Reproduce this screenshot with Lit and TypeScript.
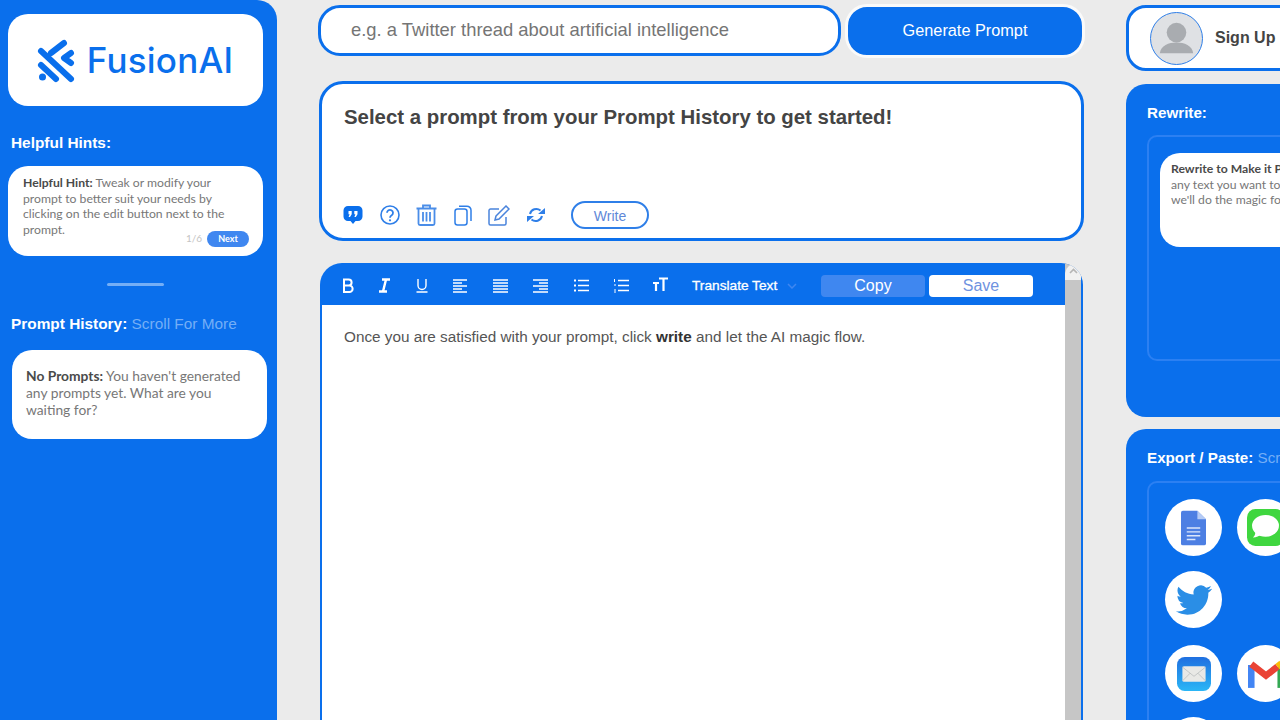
import { LitElement, html, css, svg } from "lit";
import { customElement } from "lit/decorators.js";

const tools = [
  { w: 36, d: svg`<path d="M4 2.500h4.600a3 3 0 0 1 0 6H4zM4 8.500h5.400a3.200 3.200 0 0 1 0 6.500H4z" fill="none" stroke="#fff" stroke-width="2"/>` },
  { w: 36, d: svg`<path d="M6 2.500h8M3 14.500h8M10 2.500 7 14.500" fill="none" stroke="#fff" stroke-width="2.400"/>` },
  { w: 40, d: svg`<path d="M4 2v6.500a4 4 0 0 0 8 0V2M2.500 15h11" fill="none" stroke="#fff" stroke-width="1.400"/>` },
  { w: 36, d: svg`<path d="M1 3h14M1 6h9M1 9h14M1 12h9M1 15h14" stroke="#fff" stroke-width="1.300"/>` },
  { w: 44, d: svg`<path d="M1 3h15M1 6h15M1 9h15M1 12h15M1 15h15" stroke="#fff" stroke-width="1.300"/>` },
  { w: 36, d: svg`<path d="M1 3h15M7 6h9M1 9h15M7 12h9M1 15h15" stroke="#fff" stroke-width="1.300"/>` },
  { w: 46, d: svg`<path d="M5 3.500h11M5 8.500h11M5 13.500h11" stroke="#fff" stroke-width="1.300"/><path d="M1 3.500h2M1 8.500h2M1 13.500h2" stroke="#fff" stroke-width="1.800"/>` },
  { w: 34, d: svg`<path d="M5 3.500h11M5 8.500h11M5 13.500h11" stroke="#fff" stroke-width="1.300"/><path d="M1.500 2v3M1 8h2M1 13h2M1 15h2" stroke="#fff" stroke-width="1"/>` },
  { w: 44, d: svg`<path d="M7 1.500h9M11.500 1.500V14M1 6h6M4 6v8" fill="none" stroke="#fff" stroke-width="2.200"/>` },
];

@customElement("app-root")
export class AppRoot extends LitElement {
  static styles = css`
    :host {
      display: block;
      width: 1280px;
      height: 720px;
      overflow: hidden;
      background: #ebebeb;
      font-family: "Liberation Sans", Arial, sans-serif;
    }
    .page {
      display: flex;
      width: 1280px;
      height: 720px;
      overflow: hidden;
    }
    .side {
      flex: 0 0 277px;
      height: 720px;
      box-sizing: border-box;
      padding: 14px 14px 0 8px;
      background: #0a6fec;
      border-top-right-radius: 20px;
      overflow: hidden;
    }
    .logo {
      height: 92px;
      background: #fff;
      border-radius: 20px;
      display: flex;
      align-items: center;
      justify-content: center;
      gap: 13px;
      color: #0a6fec;
      font: 500 35px Inter, sans-serif;
      letter-spacing: 0.2px;
      box-sizing: border-box;
    }
    .logo svg { flex: none; margin-top: 3px; overflow: visible; }
    h3 {
      margin: 0;
      font-size: 15.400px;
      line-height: 18px;
      font-weight: 700;
      color: #fff;
    }
    h3 span { font-weight: 400; color: #74aef6; }
    .side h3 { padding-left: 3px; }
    .hints-title { margin-top: 28px; }
    .card {
      background: #fff;
      border-radius: 20px;
      box-sizing: border-box;
      font: 400 12.200px/15.500px Lato, sans-serif;
      color: #777;
    }
    .card b { color: #4a4a4a; font-weight: 700; }
    .hint {
      position: relative;
      height: 90px;
      margin-top: 14px;
      padding: 9px 30px 0 15px;
    }
    .next-row {
      position: absolute;
      right: 14px;
      bottom: 9px;
      display: flex;
      align-items: center;
      gap: 5px;
      font-size: 10px;
      color: #c4c4c4;
    }
    .next {
      width: 42px;
      height: 16px;
      border-radius: 8px;
      background: #3f87f0;
      color: #fff;
      font: 700 9px/16px Lato, sans-serif;
      text-align: center;
    }
    .rule {
      width: 57px;
      height: 3px;
      margin: 27px 0 0 99px;
      background: #74aef6;
      border-radius: 2px;
    }
    .history-title { margin-top: 29px; }
    .empty {
      width: 255px;
      height: 89px;
      margin: 17px 0 0 4px;
      padding: 17px 14px 0 14px;
      font-size: 13.800px;
      line-height: 17px;
    }
    .main {
      flex: 0 0 767px;
      margin-left: 41px;
      padding-top: 5px;
      box-sizing: border-box;
    }
    .search {
      display: flex;
      align-items: flex-start;
      gap: 4px;
    }
    .input {
      width: 523px;
      height: 51px;
      box-sizing: border-box;
      border: 3px solid #0a6fec;
      border-radius: 22px;
      background: #fff;
      padding-left: 30px;
      color: #757575;
      font-size: 18.400px;
      line-height: 44px;
    }
    .generate {
      width: 240px;
      height: 54px;
      margin-top: -1px;
      box-sizing: border-box;
      border: 3px solid #fafafa;
      border-radius: 22px;
      background: #0a6fec;
      color: #fff;
      font-size: 16.300px;
      line-height: 47px;
      text-align: center;
    }
    .prompt {
      width: 765px;
      height: 160px;
      margin: 23px 0 0 1px;
      box-sizing: border-box;
      border: 3px solid #0a6fec;
      border-radius: 24px;
      background: #fff;
      padding: 20px 22px 0;
      display: flex;
      flex-direction: column;
    }
    .prompt h2 {
      margin: 0;
      font-size: 20.400px;
      line-height: 26px;
      font-weight: 700;
      color: #444;
    }
    .actions {
      display: flex;
      align-items: center;
      margin: 71px 0 0 -9px;
      height: 28px;
    }
    .action {
      display: flex;
      justify-content: center;
      width: 36.500px;
      flex: none;
    }
    .write {
      width: 78px;
      height: 28px;
      margin-left: 17px;
      box-sizing: border-box;
      border: 2px solid #2f7fe8;
      border-radius: 14px;
      color: #5f88d8;
      font-size: 14px;
      line-height: 27px;
      text-align: center;
    }
    .editor {
      width: 763px;
      height: 600px;
      margin: 22px 0 0 2px;
      box-sizing: border-box;
      display: flex;
      background: #0a6fec;
      border-radius: 22px 22px 0 0;
      padding-right: 2px;
      overflow: hidden;
    }
    .doc {
      flex: 1;
      min-width: 0;
      display: flex;
      flex-direction: column;
    }
    .toolbar {
      height: 42px;
      flex: none;
      display: flex;
      align-items: center;
      padding: 3px 0 0 10px;
      box-sizing: border-box;
    }
    .tool {
      display: flex;
      justify-content: center;
      flex: none;
    }
    .translate {
      margin-left: 10px;
      width: 85px;
      color: #fff;
      font-size: 13.700px;
      -webkit-text-stroke: 0.3px #fff;
      white-space: nowrap;
    }
    .chevron { margin-left: 10px; }
    .copy, .save {
      width: 104px;
      height: 22px;
      border-radius: 4px;
      font-size: 16px;
      line-height: 22px;
      text-align: center;
    }
    .copy { margin-left: 24px; background: #3f87f0; color: #fff; }
    .save { margin-left: 4px; background: #fff; color: #6f93e0; }
    .body {
      flex: 1;
      margin-left: 2px;
      background: #fff;
      padding: 22px 22px;
      color: #555;
      font-size: 15.300px;
      line-height: 20px;
    }
    .body b { color: #333; }
    .scroll {
      flex: 0 0 16px;
      background: #c6c6c6;
      border-top-right-radius: 14px;
    }
    .scroll-top {
      height: 17px;
      background: #f1f1f1;
      border-top-left-radius: 12px;
      display: flex;
      justify-content: center;
      padding-top: 5px;
      box-sizing: border-box;
    }
    .right {
      flex: 0 0 154px;
      margin-left: 41px;
      padding-top: 5px;
      box-sizing: border-box;
    }
    .account {
      width: 190px;
      height: 66px;
      box-sizing: border-box;
      border: 3px solid #0a6fec;
      border-radius: 20px;
      background: #fff;
      display: flex;
      align-items: center;
      padding-left: 21px;
      gap: 12px;
      color: #444;
      font-size: 16px;
      font-weight: 700;
    }
    .avatar {
      width: 53px;
      height: 53px;
      box-sizing: border-box;
      border: 1px solid #2f7fe8;
      border-radius: 50%;
      background: #dfe1e4;
      overflow: hidden;
      flex: none;
    }
    .panel {
      width: 190px;
      background: #0a6fec;
      border-radius: 20px;
      box-sizing: border-box;
      padding: 20px 0 0 21px;
      margin-top: 13px;
    }
    .rewrite { height: 333px; }
    .export { height: 320px; margin-top: 12px; }
    .panel h3 { white-space: nowrap; font-size: 15.200px; }
    .inner {
      width: 200px;
      box-sizing: border-box;
      margin-top: 14px;
      border: 2px solid #2c80f2;
      border-radius: 10px;
    }
    .rewrite .inner { height: 226px; margin-top: 13px; padding: 16px 0 0 11px; }
    .rewrite-card {
      width: 200px;
      height: 94px;
      padding: 8px 0 0 11px;
      font-size: 12.200px;
      line-height: 15.500px;
      white-space: nowrap;
    }
    .export .inner { height: 300px; padding: 16px 0 0 16px; }
    .apps {
      display: grid;
      grid-template-columns: 57px 57px;
      column-gap: 15px;
      row-gap: 15px;
    }
    .app {
      width: 57px;
      height: 57px;
      border-radius: 50%;
      background: #fff;
      display: flex;
      align-items: center;
      justify-content: center;
    }
    .lower { margin-top: 2px; }
  `;

  render() {
    return html`
      <div class="page">
        <aside class="side">
          <div class="logo">
            <svg width="36" height="42" viewBox="0 0 36 42" fill="none" stroke="#0a6fec" stroke-width="6" stroke-linecap="round" stroke-linejoin="round">
              <path d="M3 10 33 38M3 24 18 38M26 2 13 12M33 12 26 17 33 22" />
              <circle cx="4.500" cy="36" r="3.500" fill="#0a6fec" stroke="none" />
            </svg>
            <span>FusionAI</span>
          </div>
          <h3 class="hints-title">Helpful Hints:</h3>
          <div class="card hint">
            <b>Helpful Hint:</b> Tweak or modify your prompt to better suit your needs by clicking on the edit button next to the prompt.
            <div class="next-row"><span>1/6</span><div class="next">Next</div></div>
          </div>
          <div class="rule"></div>
          <h3 class="history-title">Prompt History: <span>Scroll For More</span></h3>
          <div class="card empty"><b>No Prompts:</b> You haven't generated any prompts yet. What are you waiting for?</div>
        </aside>

        <main class="main">
          <div class="search">
            <div class="input">e.g. a Twitter thread about artificial intelligence</div>
            <div class="generate">Generate Prompt</div>
          </div>
          <section class="prompt">
            <h2>Select a prompt from your Prompt History to get started!</h2>
            <div class="actions">
              <span class="action">
                <svg width="20" height="20" viewBox="0 0 20 20"><path d="M5 1h10a4.500 4.500 0 0 1 4.500 4.500v6A4.500 4.500 0 0 1 15 16h-2.500L10 19l-2.500-3H5a4.500 4.500 0 0 1-4.500-4.500v-6A4.500 4.500 0 0 1 5 1z" fill="#0a6fec"/><path d="M5.500 6h3.200v3.200L7 12H5.600l1-2.800H5.500zM11.300 6h3.200v3.200L12.800 12h-1.400l1-2.800h-1.100z" fill="#fff"/></svg>
              </span>
              <span class="action">
                <svg width="20" height="20" viewBox="0 0 20 20" fill="none" stroke="#2f7fe8"><circle cx="10" cy="10" r="9" stroke-width="1.600"/><path d="M7 7.800a3 3 0 1 1 4.700 2.500c-1.100.7-1.700 1.200-1.700 2.500" stroke-width="1.800"/><circle cx="10" cy="15.300" r="1.100" fill="#2f7fe8" stroke="none"/></svg>
              </span>
              <span class="action">
                <svg width="21" height="22" viewBox="0 0 21 22" fill="none" stroke="#4a8de8" stroke-width="1.800"><path d="M.5 4.500h20M7 4V1.500h7V4M2.500 5v14.500a1.500 1.500 0 0 0 1.500 1.500h13a1.500 1.500 0 0 0 1.500-1.500V5M7 8v9.500M10.500 8v9.500M14 8v9.500"/></svg>
              </span>
              <span class="action">
                <svg width="18" height="21" viewBox="0 0 18 21" fill="none" stroke="#2f7fe8" stroke-width="1.500"><rect x="1" y="4" width="12" height="16" rx="2.500"/><path d="M5 1.200h8a4 4 0 0 1 4 4V16"/></svg>
              </span>
              <span class="action">
                <svg width="22" height="21" viewBox="0 0 22 21" fill="none" stroke="#4a84dc" stroke-width="1.500"><path d="M18 12v6.500a1.500 1.500 0 0 1-1.500 1.500h-14A1.500 1.500 0 0 1 1 18.500v-13A1.500 1.500 0 0 1 2.500 4H11"/><path d="m8 11 10-10 3 3-10 10-4 1z"/></svg>
              </span>
              <span class="action">
                <svg width="20" height="16" viewBox="0 0 20 16" fill="none" stroke="#2f7fe8" stroke-width="2"><path d="M4 7a6.500 6.500 0 0 1 10.500-3.500M16 9a6.500 6.500 0 0 1-10.500 3.500"/><path d="M12 7h7V1zM8 9H1v6z" fill="#2f7fe8" stroke="none"/></svg>
              </span>
              <div class="write">Write</div>
            </div>
          </section>
          <section class="editor">
            <div class="doc">
              <div class="toolbar">
                ${tools.map(
                  (t) => html`<span class="tool" style="width:${t.w}px"><svg width="17" height="17" viewBox="0 0 17 17">${t.d}</svg></span>`
                )}
                <span class="translate">Translate Text</span>
                <svg class="chevron" width="10" height="6" viewBox="0 0 10 6" fill="none" stroke="#3f87f0" stroke-width="1.500"><path d="m1 1 4 4 4-4"/></svg>
                <div class="copy">Copy</div>
                <div class="save">Save</div>
              </div>
              <div class="body">Once you are satisfied with your prompt, click <b>write</b> and let the AI magic flow.</div>
            </div>
            <div class="scroll">
              <div class="scroll-top">
                <svg width="9" height="6" viewBox="0 0 9 6" fill="none" stroke="#b5b5b5" stroke-width="1.600"><path d="m1 5 3.500-3.500L8 5"/></svg>
              </div>
            </div>
          </section>
        </main>

        <aside class="right">
          <div class="account">
            <div class="avatar">
              <svg width="51" height="51" viewBox="0 0 52 52" fill="#a9acb0"><circle cx="26" cy="20" r="10"/><path d="M9 41c1-8 9-11 17-11s16 3 17 11z"/></svg>
            </div>
            <span>Sign Up</span>
          </div>
          <section class="panel rewrite">
            <h3>Rewrite:</h3>
            <div class="inner">
              <div class="card rewrite-card"><b>Rewrite to Make it Pop:</b><br />any text you want to rewrite, and<br />we'll do the magic for you</div>
            </div>
          </section>
          <section class="panel export">
            <h3>Export / Paste: <span>Scroll For More</span></h3>
            <div class="inner">
              <div class="apps">
                <div class="app">
                  <svg width="25" height="36" viewBox="0 0 26 36"><path d="M2 0h15l9 9v25a2 2 0 0 1-2 2H2a2 2 0 0 1-2-2V2a2 2 0 0 1 2-2z" fill="#4d7fe3"/><path d="M17 0l9 9h-9z" fill="#b5cbf5"/><path d="M6 18h14M6 22h14M6 26h14M6 30h9" stroke="#dce6fb" stroke-width="1.500"/></svg>
                </div>
                <div class="app">
                  <svg width="37" height="37" viewBox="0 0 44 44"><rect width="44" height="44" rx="10" fill="#3fd63f"/><ellipse cx="22" cy="20" rx="16" ry="13" fill="#fff"/><path d="M10 27c0 4-2 6-3 7 4 0 8-2 10-4z" fill="#fff"/></svg>
                </div>
                <div class="app">
                  <svg width="36" height="36" viewBox="0 0 24 24"><path fill="#2a8ee6" d="M23.953 4.570a10 10 0 0 1-2.825.775 4.958 4.958 0 0 0 2.163-2.723c-.951.555-2.005.959-3.127 1.184a4.920 4.920 0 0 0-8.384 4.482C7.690 8.095 4.067 6.130 1.640 3.162a4.822 4.822 0 0 0-.666 2.475c0 1.710.870 3.213 2.188 4.096a4.904 4.904 0 0 1-2.228-.616v.060a4.923 4.923 0 0 0 3.946 4.827 4.996 4.996 0 0 1-2.212.085 4.936 4.936 0 0 0 4.604 3.417 9.867 9.867 0 0 1-6.102 2.105c-.390 0-.779-.023-1.170-.067a13.995 13.995 0 0 0 7.557 2.209c9.053 0 13.998-7.496 13.998-13.985 0-.210 0-.420-.015-.630A9.935 9.935 0 0 0 24 4.590z"/></svg>
                </div>
                <div></div>
                <div class="app lower">
                  <svg width="34" height="34" viewBox="0 0 44 44"><defs><linearGradient id="m" x1="0" y1="0" x2="0" y2="1"><stop offset="0" stop-color="#1f6fe0"/><stop offset="1" stop-color="#2bb6f6"/></linearGradient></defs><rect width="44" height="44" rx="10" fill="url(#m)"/><rect x="7" y="12" width="30" height="20" rx="2" fill="#e9e9e6"/><path d="m7 13 15 12 15-12M7 31l10-10M37 31 27 21" fill="none" stroke="#b9bcbc" stroke-width="1"/></svg>
                </div>
                <div class="app lower">
                  <svg width="36" height="28" viewBox="0 0 44 34" fill="none"><path d="M4 34V6" stroke="#4285f4" stroke-width="8"/><path d="M40 34V8" stroke="#34a853" stroke-width="8"/><path d="M4 5l18 14L36 8" stroke="#ea4335" stroke-width="8"/><path d="M36 8l5-4" stroke="#fbbc04" stroke-width="8"/></svg>
                </div>
                <div class="app"></div>
              </div>
            </div>
          </section>
        </aside>
      </div>
    `;
  }
}
